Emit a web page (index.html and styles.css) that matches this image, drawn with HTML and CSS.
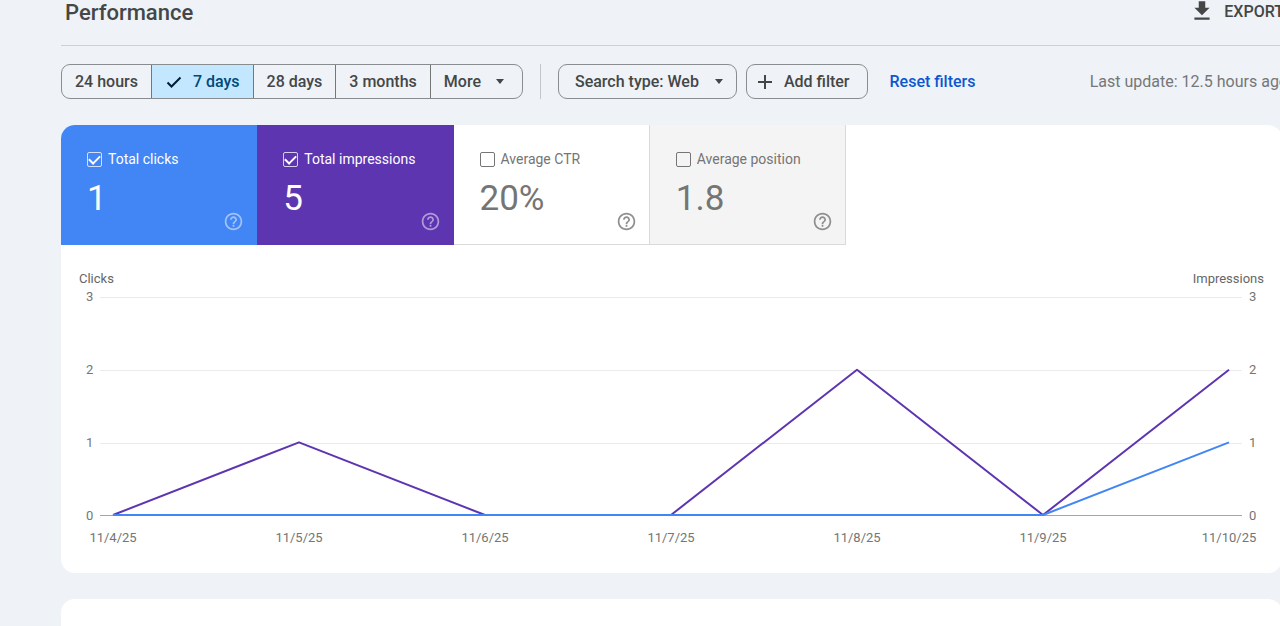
FILE: index.html
```html
<!DOCTYPE html>
<html lang="en">
<head>
  <meta charset="UTF-8">
  <title>Performance</title>
  <meta name="viewport" content="width=device-width, initial-scale=1.0">
  <link rel="stylesheet" href="styles.css">
</head>
<body>
  <svg class="hidden">
    <symbol id="help" viewBox="0 0 24 24">
      <path d="M11 18h2v-2h-2v2zm1-16C6.48 2 2 6.48 2 12s4.48 10 10 10 10-4.48 10-10S17.52 2 12 2zm0 18c-4.41 0-8-3.59-8-8s3.59-8 8-8 8 3.59 8 8-3.59 8-8 8zm0-14c-2.21 0-4 1.79-4 4h2c0-1.1.9-2 2-2s2 .9 2 2c0 2-3 1.75-3 5h2c0-2.25 3-2.5 3-5 0-2.21-1.79-4-4-4z"/>
    </symbol>
  </svg>

  <main class="page">
    <header class="page-header">
      <h1>Performance</h1>
      <button class="export">
        <svg viewBox="0 0 24 24"><path d="M19 9h-4V3H9v6H5l7 7 7-7zM5 18v2h14v-2H5z"/></svg>
        EXPORT
      </button>
    </header>

    <div class="filters">
      <div class="segments">
        <button class="seg">24 hours</button>
        <button class="seg active">
          <svg class="check" viewBox="0 0 16 16"><path d="M1.500 8.500l4 4L14.500 3.500"/></svg>
          7 days
        </button>
        <button class="seg">28 days</button>
        <button class="seg">3 months</button>
        <button class="seg more">More <span class="caret"></span></button>
      </div>
      <span class="divider"></span>
      <button class="chip type">Search type: Web <span class="caret"></span></button>
      <button class="chip add">
        <svg class="plus" viewBox="0 0 14 14"><path d="M7 0v14M0 7h14"/></svg>
        Add filter
      </button>
      <a class="reset" href="#">Reset filters</a>
      <span class="updated">Last update: 12.5 hours ago</span>
    </div>

    <section class="card">
      <div class="metrics">
        <div class="metric clicks">
          <label><input type="checkbox" checked> Total clicks</label>
          <div class="value">1</div>
          <button class="help" aria-label="Help"><svg><use href="#help"/></svg></button>
        </div>
        <div class="metric impressions">
          <label><input type="checkbox" checked> Total impressions</label>
          <div class="value">5</div>
          <button class="help" aria-label="Help"><svg><use href="#help"/></svg></button>
        </div>
        <div class="metric">
          <label><input type="checkbox"> Average CTR</label>
          <div class="value">20%</div>
          <button class="help" aria-label="Help"><svg><use href="#help"/></svg></button>
        </div>
        <div class="metric position">
          <label><input type="checkbox"> Average position</label>
          <div class="value">1.8</div>
          <button class="help" aria-label="Help"><svg><use href="#help"/></svg></button>
        </div>
      </div>

      <div class="chart">
        <div class="axis-titles"><span>Clicks</span><span>Impressions</span></div>
        <div class="chart-body">
          <div class="ticks left"><span>3</span><span>2</span><span>1</span><span>0</span></div>
          <div class="plot">
            <svg class="lines" viewBox="0 0 6 3" preserveAspectRatio="none">
              <polyline class="line-impressions" points="0,3 1,2 2,3 3,3 4,1 5,3 6,1"/>
              <polyline class="line-clicks" points="0,3 1,3 2,3 3,3 4,3 5,3 6,2"/>
            </svg>
          </div>
          <div class="ticks right"><span>3</span><span>2</span><span>1</span><span>0</span></div>
        </div>
        <div class="dates">
          <span>11/4/25</span>
          <span>11/5/25</span>
          <span>11/6/25</span>
          <span>11/7/25</span>
          <span>11/8/25</span>
          <span>11/9/25</span>
          <span>11/10/25</span>
        </div>
      </div>
    </section>

    <section class="card next"></section>
  </main>
</body>
</html>
```
FILE: styles.css
```css
* {
  box-sizing: border-box;
}

body {
  margin: 0;
  background: #eff2f7;
  color: #444746;
  font-family: Roboto, "Liberation Sans", sans-serif;
  font-size: 16px;
  overflow: hidden;
}

button {
  margin: 0;
  padding: 0;
  border: none;
  background: none;
  color: inherit;
  font: inherit;
  font-weight: 500;
  white-space: nowrap;
  cursor: pointer;
}

.hidden {
  display: none;
}

.page {
  margin-left: 61px;
  margin-right: -2px;
}

/* header */
.page-header {
  display: flex;
  justify-content: space-between;
  align-items: flex-start;
  height: 46px;
  padding-left: 4px;
  border-bottom: 1px solid #cdd0d4;
}

h1 {
  margin: 0;
  font-size: 22px;
  line-height: 26px;
  font-weight: 500;
}

.export {
  display: flex;
  align-items: center;
  gap: 9px;
  height: 22px;
  margin-right: -2px;
}

.export svg {
  width: 26px;
  height: 26px;
  fill: #444746;
}

/* filter bar */
.filters {
  display: flex;
  align-items: center;
  height: 35px;
  margin: 18px 0 26px;
}

.segments {
  display: flex;
  height: 35px;
  border: 1px solid #8a8d90;
  border-radius: 9px;
  overflow: hidden;
}

.seg {
  display: flex;
  align-items: center;
  padding: 0 13px;
}

.seg + .seg {
  border-left: 1px solid #747775;
}

.seg.active {
  gap: 11px;
  padding-left: 14px;
  background: #c2e7ff;
  color: #004a77;
}

.seg.more {
  gap: 15px;
  padding-right: 18px;
}

.check {
  width: 16px;
  height: 16px;
  fill: none;
  stroke: #001d35;
  stroke-width: 2;
}

.caret {
  border: 4px solid transparent;
  border-top: 5px solid #444746;
  border-bottom: none;
}

.divider {
  width: 1px;
  height: 35px;
  margin: 0 17px;
  background: #c4c7c9;
}

.chip {
  display: flex;
  align-items: center;
  height: 35px;
  border: 1px solid #8a8d90;
  border-radius: 9px;
}

.type {
  gap: 16px;
  padding: 0 13px 0 16px;
  margin-right: 9px;
}

.add {
  gap: 12px;
  padding: 0 17px 0 11px;
}

.plus {
  width: 14px;
  height: 14px;
  stroke: #444746;
  stroke-width: 2;
}

.reset {
  margin-left: 22px;
  color: #0b57d0;
  font-weight: 500;
  text-decoration: none;
  white-space: nowrap;
}

.updated {
  margin-left: auto;
  margin-right: -6px;
  color: #757779;
  white-space: nowrap;
}

/* cards */
.card {
  background: #fff;
  border-radius: 14px;
  overflow: hidden;
}

.card.next {
  height: 120px;
  margin-top: 26px;
}

.metrics {
  display: grid;
  grid-template-columns: repeat(4, 1fr);
  width: 785px;
  max-width: 100%;
}

.metric {
  position: relative;
  height: 120px;
  padding: 24px 26px;
  border-right: 1px solid #dadada;
  border-bottom: 1px solid #dadada;
  color: #757575;
}

.metric label {
  display: flex;
  align-items: center;
  gap: 6px;
  font-size: 14px;
  line-height: 20px;
  white-space: nowrap;
}

.metric input {
  appearance: none;
  display: grid;
  place-items: center;
  width: 15px;
  height: 15px;
  margin: 0;
  border: 1px solid #757575;
  border-radius: 2px;
}

.metric input:checked {
  border-color: rgba(255, 255, 255, 0.75);
}

.metric input:checked::before {
  content: "";
  width: 9px;
  height: 5px;
  border-left: 2px solid #fff;
  border-bottom: 2px solid #fff;
  transform: translateY(-1px) rotate(-45deg);
}

.metric .value {
  margin-top: 8px;
  font-size: 35px;
  line-height: 43px;
}

.help {
  position: absolute;
  right: 12px;
  bottom: 12px;
  width: 21px;
  height: 21px;
}

.help svg {
  display: block;
  width: 21px;
  height: 21px;
  fill: #8f8f8f;
}

.clicks,
.impressions {
  border-color: transparent;
  background-clip: border-box;
  color: #fff;
}

.clicks {
  background: #4285f4;
}

.impressions {
  background: #5e35b1;
}

.clicks .help svg,
.impressions .help svg {
  fill: rgba(255, 255, 255, 0.5);
}

.position {
  background: #f4f4f4;
}

/* chart */
.chart {
  padding: 26px 18px 27px;
  color: #757575;
  font-size: 13px;
  line-height: 16px;
}

.axis-titles {
  display: flex;
  justify-content: space-between;
  color: #666;
}

.chart-body {
  display: flex;
}

.ticks {
  display: flex;
  flex-direction: column;
  justify-content: space-between;
  height: 235px;
  margin-top: 2px;
}

.left {
  width: 21px;
  padding-left: 7px;
}

.right {
  width: 22px;
  padding-left: 7px;
}

.plot {
  flex: 1;
  height: 219px;
  margin-top: 10px;
  padding: 0 13px;
  border-bottom: 1px solid #a5a5a5;
  background: repeating-linear-gradient(#ebebeb 0 1px, transparent 1px 73px);
}

.lines {
  display: block;
  width: 100%;
  height: 218px;
  overflow: visible;
}

.lines polyline {
  fill: none;
  stroke-width: 2;
  stroke-linejoin: round;
  vector-effect: non-scaling-stroke;
}

.line-impressions {
  stroke: #5e35b1;
}

.line-clicks {
  stroke: #4285f4;
}

.dates {
  display: flex;
  justify-content: space-between;
  margin: 6px 35px 0 34px;
}

/* zero-width boxes keep every date centred under its point */
.dates span {
  display: flex;
  justify-content: center;
  width: 0;
}
```
